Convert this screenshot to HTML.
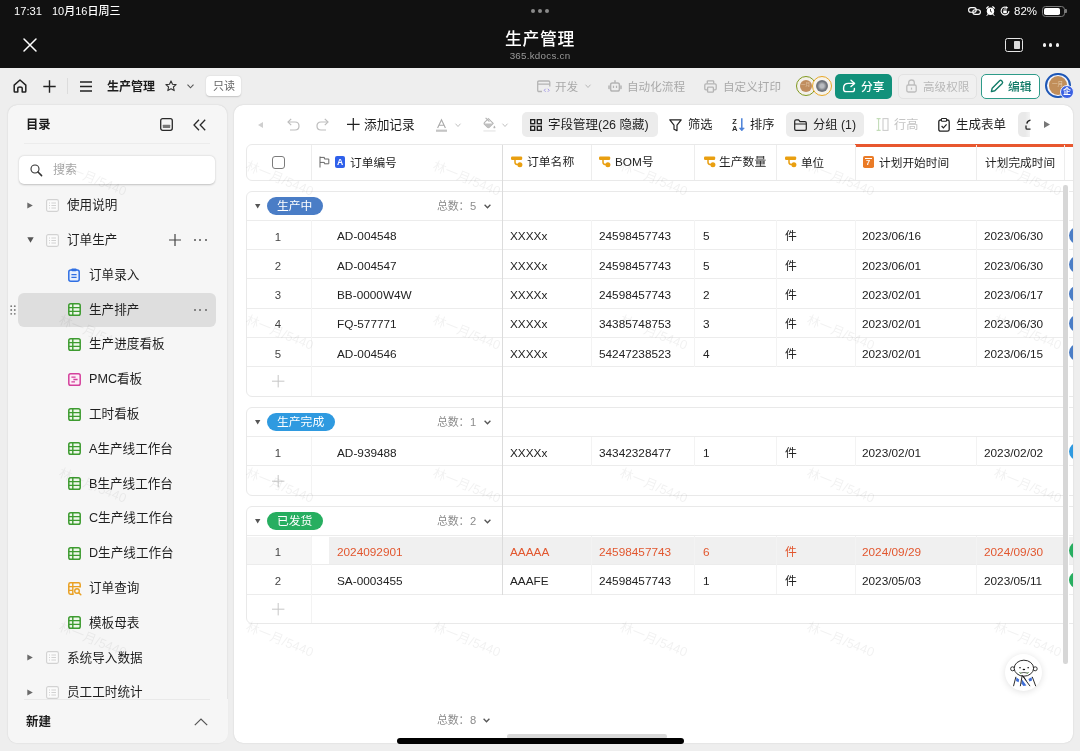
<!DOCTYPE html>
<html lang="zh-CN">
<head>
<meta charset="utf-8">
<title>生产管理</title>
<style>
*{box-sizing:border-box;margin:0;padding:0}
html,body{width:1080px;height:751px;overflow:hidden}
body{position:relative;background:#eeeeee;font-family:"Liberation Sans","Noto Sans CJK SC",sans-serif;color:#222;font-size:12px;-webkit-font-smoothing:antialiased}
.abs{position:absolute}
svg{display:block;overflow:visible}
.t{position:absolute;white-space:nowrap;line-height:1;will-change:transform}
/* ---------- top black area ---------- */
#top{position:absolute;left:0;top:0;width:1080px;height:68px;background:#111111}
#top .t{color:#fff}
/* ---------- app toolbar ---------- */
#bar{position:absolute;left:0;top:68px;width:1080px;height:37px;background:#eeeeee}
.gray{color:#a9a9a9}
.btn{position:absolute;height:25px;border-radius:5px;top:74px}
/* ---------- sidebar ---------- */
#side{position:absolute;left:7.6px;top:105px;width:219.8px;height:638px;background:#f6f6f6;border-radius:9px;box-shadow:0 0 1.5px rgba(0,0,0,.18)}
.item{position:absolute;left:0;height:34px;width:220px}
.item .t{font-size:12.5px;color:#1f1f1f;top:11px}
#wm{position:absolute;left:0;top:105px;width:1073px;height:638px;overflow:hidden;pointer-events:none}
#wm .w{position:absolute;white-space:nowrap;line-height:1;font-size:13px;color:rgba(0,0,0,.055);transform-origin:0 0;transform:rotate(22deg);margin-top:-105px}
/* ---------- main ---------- */
#main{position:absolute;left:234px;top:105px;width:839px;height:638px;background:#fff;border-radius:9px;box-shadow:0 0 1.5px rgba(0,0,0,.18);overflow:hidden}
</style>
</head>
<body>

<!-- ================= TOP BLACK AREA ================= -->
<div id="top">
  <div class="t" style="left:13.8px;top:5.5px;font-size:11.2px;font-weight:400">17:31</div>
  <div class="t" style="left:51.5px;top:5.5px;font-size:11px;font-weight:500">10月16日周三</div>
  <!-- centre dots -->
  <div class="abs" style="left:530.7px;top:8.7px;width:4.6px;height:4.6px;border-radius:50%;background:#8a8a8a"></div>
  <div class="abs" style="left:537.7px;top:8.7px;width:4.6px;height:4.6px;border-radius:50%;background:#8a8a8a"></div>
  <div class="abs" style="left:544.7px;top:8.7px;width:4.6px;height:4.6px;border-radius:50%;background:#8a8a8a"></div>
  <!-- status icons -->
  <!-- link icon -->
  <svg class="abs" style="left:968px;top:7px" width="13" height="8" viewBox="0 0 13 8"><rect x="0.6" y="0.6" width="7.6" height="4.6" rx="2.3" fill="none" stroke="#fff" stroke-width="1.1"/><rect x="4.8" y="2.8" width="7.6" height="4.6" rx="2.3" fill="none" stroke="#fff" stroke-width="1.1"/></svg>
  <!-- alarm -->
  <svg class="abs" style="left:986px;top:6px" width="9" height="10" viewBox="0 0 9 10"><circle cx="4.5" cy="5.2" r="3.7" fill="#fff"/><path d="M0.6 2.2L2.2 0.7M8.4 2.2L6.8 0.7" stroke="#fff" stroke-width="1.2" stroke-linecap="round"/><path d="M1.8 8.4L1 9.5M7.2 8.4L8 9.5" stroke="#fff" stroke-width="1" stroke-linecap="round"/><path d="M4.5 3V5.4L6 6.2" stroke="#111" stroke-width="0.8" fill="none"/></svg>
  <!-- rotation lock -->
  <svg class="abs" style="left:1000px;top:6px" width="10" height="10" viewBox="0 0 10 10"><path d="M8.9 5A3.9 3.9 0 1 1 6.9 1.6" fill="none" stroke="#fff" stroke-width="1.1"/><path d="M6.2 0.2L8.2 1.7L6 2.9Z" fill="#fff"/><rect x="3.2" y="4.4" width="3.6" height="2.8" rx="0.5" fill="#fff"/><path d="M3.9 4.4V3.6Q3.9 2.7 5 2.7Q6.1 2.7 6.1 3.6V4.4" fill="none" stroke="#fff" stroke-width="0.8"/></svg>
  <div class="t" style="left:1014px;top:6px;font-size:11.5px;font-weight:500">82%</div>
  <!-- battery -->
  <div class="abs" style="left:1042px;top:5.5px;width:22.5px;height:11px;border:1px solid #7a7a7a;border-radius:3.5px"></div>
  <div class="abs" style="left:1044px;top:7.5px;width:15.5px;height:7px;background:#fff;border-radius:1.8px"></div>
  <div class="abs" style="left:1065.3px;top:9px;width:1.4px;height:4px;background:#7a7a7a;border-radius:0 1px 1px 0"></div>
  <!-- split view -->
  <div class="abs" style="left:1005px;top:38px;width:18px;height:14px;border:1.4px solid #e6e6e6;border-radius:2.5px"></div>
  <div class="abs" style="left:1014px;top:41px;width:6.3px;height:8px;background:#dcdcdc;border-radius:0.8px"></div>
  <!-- more dots -->
  <div class="abs" style="left:1042.7px;top:43.4px;width:3.3px;height:3.3px;border-radius:50%;background:#f0f0f0"></div>
  <div class="abs" style="left:1049.1px;top:43.4px;width:3.3px;height:3.3px;border-radius:50%;background:#f0f0f0"></div>
  <div class="abs" style="left:1055.5px;top:43.4px;width:3.3px;height:3.3px;border-radius:50%;background:#f0f0f0"></div>
  <!-- close X -->
  <svg class="abs" style="left:22.6px;top:37.6px" width="14" height="14" viewBox="0 0 14 14"><path d="M1 1L13 13M13 1L1 13" stroke="#fff" stroke-width="1.5" fill="none" stroke-linecap="round"/></svg>
  <div class="t" style="left:0;width:1080px;text-align:center;top:31.7px;font-size:16.8px;letter-spacing:.7px;font-weight:500">生产管理</div>
  <div class="t" style="left:0;width:1080px;text-align:center;top:50.6px;font-size:9.8px;color:#9a9a9a;letter-spacing:.25px">365.kdocs.cn</div>
</div>

<!-- ================= APP TOOLBAR ================= -->
<div id="bar">
  <!-- home -->
  <svg class="abs" style="left:13px;top:11px" width="14" height="14" viewBox="0 0 14 14"><path d="M1.2 6.1 L7 1 L12.8 6.1 V12.2 Q12.8 13 12 13 H9.2 V9.3 Q9.2 8 7 8 Q4.8 8 4.8 9.3 V13 H2 Q1.2 13 1.2 12.2 Z" fill="none" stroke="#222" stroke-width="1.5" stroke-linejoin="round"/></svg>
  <!-- plus -->
  <svg class="abs" style="left:43px;top:12px" width="13" height="13" viewBox="0 0 13 13"><path d="M6.5 0.3V12.7M0.3 6.5H12.7" stroke="#222" stroke-width="1.4" fill="none"/></svg>
  <div class="abs" style="left:67px;top:10px;width:1px;height:16px;background:#dcdcdc"></div>
  <!-- hamburger -->
  <svg class="abs" style="left:80px;top:13px" width="12" height="11" viewBox="0 0 12 11"><path d="M0 1H12M0 5.5H12M0 10H12" stroke="#222" stroke-width="1.3" fill="none"/></svg>
  <div class="t" style="left:107px;top:13px;font-size:12px;font-weight:700;color:#1c1c1c">生产管理</div>
  <!-- star -->
  <svg class="abs" style="left:165px;top:12px" width="12" height="12" viewBox="0 0 12 12"><path d="M6 0.9 L7.5 4.2 L11.1 4.6 L8.4 7 L9.2 10.6 L6 8.8 L2.8 10.6 L3.6 7 L0.9 4.6 L4.5 4.2 Z" fill="none" stroke="#333" stroke-width="1.1" stroke-linejoin="round"/></svg>
  <!-- chevron -->
  <svg class="abs" style="left:187px;top:16px" width="7" height="5" viewBox="0 0 7 5"><path d="M0.5 0.7L3.5 3.8L6.5 0.7" stroke="#555" stroke-width="1.1" fill="none"/></svg>
  <!-- read only badge -->
  <div class="abs" style="left:206px;top:8px;width:35px;height:20px;background:#fff;border-radius:4px;box-shadow:0 0.5px 1.5px rgba(0,0,0,.18)"></div>
  <div class="t" style="left:213px;top:13px;font-size:11px;color:#666">只读</div>

  <!-- dev -->
  <svg class="abs" style="left:537px;top:12px" width="14" height="13" viewBox="0 0 14 13"><path d="M5 11.5H2Q0.7 11.5 0.7 10.2V2.3Q0.7 1 2 1H11.5Q12.8 1 12.8 2.3V6.5M0.7 4.2H12.8" fill="none" stroke="#b4b4b4" stroke-width="1.3"/><path d="M8.6 8.8L7.2 10.3L8.6 11.8M10.8 8.8L12.2 10.3L10.8 11.8" fill="none" stroke="#a79be8" stroke-width="1"/></svg>
  <div class="t gray" style="left:555px;top:13px;font-size:11.6px">开发</div>
  <svg class="abs" style="left:585px;top:16px" width="6" height="5" viewBox="0 0 6 5"><path d="M0.5 0.7L3 3.5L5.5 0.7" stroke="#b8b8b8" stroke-width="1" fill="none"/></svg>
  <!-- robot -->
  <svg class="abs" style="left:608px;top:11px" width="14" height="14" viewBox="0 0 14 14"><path d="M7 1.2V3.8" stroke="#b4b4b4" stroke-width="1.5"/><rect x="2.6" y="3.9" width="8.8" height="8.2" rx="1.8" fill="none" stroke="#b4b4b4" stroke-width="1.5"/><path d="M1 7V9.4M13 7V9.4" stroke="#b4b4b4" stroke-width="1.5" stroke-linecap="round"/><path d="M5.5 6.8V9M8.5 6.8V9" stroke="#b4b4b4" stroke-width="1.2"/></svg>
  <div class="t gray" style="left:627px;top:13px;font-size:11.6px">自动化流程</div>
  <!-- printer -->
  <svg class="abs" style="left:704px;top:12px" width="13" height="13" viewBox="0 0 13 13"><path d="M3.3 3.6V1.6Q3.3 0.8 4.1 0.8H8.9Q9.7 0.8 9.7 1.6V3.6" fill="none" stroke="#b4b4b4" stroke-width="1.3"/><path d="M3.2 9.8H2Q0.8 9.8 0.8 8.6V5Q0.8 3.8 2 3.8H11Q12.2 3.8 12.2 5V8.6Q12.2 9.8 11 9.8H9.8" fill="none" stroke="#b4b4b4" stroke-width="1.3"/><rect x="3.6" y="7.2" width="5.8" height="5" rx="0.8" fill="none" stroke="#b4b4b4" stroke-width="1.3"/></svg>
  <div class="t gray" style="left:723px;top:13px;font-size:11.6px">自定义打印</div>

  <!-- avatars -->
  <div class="abs" style="left:795.8px;top:7.7px;width:20px;height:20px;border-radius:50%;background:#f3f0ea;border:1.8px solid #80991f"></div>
  <div class="abs" style="left:799.8px;top:11.7px;width:12px;height:12px;border-radius:50%;background:#c08d5e"></div>
  <div class="t" style="left:801.3px;top:15.2px;font-size:4.5px;color:#e9d2b8">一月</div>
  <div class="abs" style="left:811.7px;top:7.7px;width:20px;height:20px;border-radius:50%;background:#f6f3ec;border:1.8px solid #e8a826"></div>
  <div class="abs" style="left:815.5px;top:11.5px;width:12.4px;height:12.4px;border-radius:50%;background:radial-gradient(circle,#b9bcc0 0 22%,#6f737a 55%,#7d8087 100%)"></div>
  <!-- share -->
  <div class="abs" style="left:835px;top:5.5px;width:56.5px;height:25px;border-radius:5px;background:#12917b"></div>
  <svg class="abs" style="left:842px;top:11px" width="14" height="14" viewBox="0 0 14 14"><path d="M9 1.2L12.6 4.4L9 7.6" fill="none" stroke="#fff" stroke-width="1.4" stroke-linejoin="round" stroke-linecap="round"/><path d="M12.4 4.4H6.5Q1.6 4.4 1.6 9V10.2Q1.6 12.6 4 12.6H10Q12.4 12.6 12.4 10.4V9.4" fill="none" stroke="#fff" stroke-width="1.4" stroke-linecap="round"/></svg>
  <div class="t" style="left:861px;top:13.5px;font-size:11.8px;color:#fff;font-weight:500">分享</div>
  <!-- advanced perm -->
  <div class="abs" style="left:897.5px;top:5.5px;width:79px;height:25px;border-radius:5px;background:#f0f0f0;border:1px solid #e2e2e2"></div>
  <svg class="abs" style="left:906px;top:11px" width="11" height="14" viewBox="0 0 11 14"><path d="M2.7 6V3.8Q2.7 1 5.5 1Q8.3 1 8.3 3.8V6" fill="none" stroke="#bdbdbd" stroke-width="1.3"/><rect x="0.8" y="6" width="9.4" height="7" rx="1.4" fill="none" stroke="#bdbdbd" stroke-width="1.3"/><path d="M5.5 8.6V10.6" stroke="#bdbdbd" stroke-width="1.2"/></svg>
  <div class="t" style="left:923px;top:13px;font-size:11.6px;color:#b8b8b8">高级权限</div>
  <!-- edit -->
  <div class="abs" style="left:981px;top:5.5px;width:58.5px;height:25px;border-radius:5px;background:#fff;border:1.2px solid #2e9b89"></div>
  <svg class="abs" style="left:990px;top:11px" width="14" height="14" viewBox="0 0 14 14"><path d="M1.4 12.6L2.2 9.2L9.6 1.8Q10.6 0.9 11.6 1.8L12.2 2.4Q13.1 3.4 12.2 4.4L4.8 11.8Z" fill="none" stroke="#117a67" stroke-width="1.4" stroke-linejoin="round"/></svg>
  <div class="t" style="left:1008px;top:13.5px;font-size:11.8px;color:#117a67;font-weight:500">编辑</div>
  <!-- me -->
  <div class="abs" style="left:1045.1px;top:4.8px;width:25.6px;height:25.6px;border-radius:50%;background:#f1f3fa;border:2px solid #1d56b6"></div>
  <div class="abs" style="left:1048.7px;top:8.3px;width:18.6px;height:18.6px;border-radius:50%;background:#c18e5a"></div>
  <div class="t" style="left:1051.6px;top:14px;font-size:5.6px;color:#e6cdae">一月</div>
  <div class="abs" style="left:1060.4px;top:17.2px;width:14px;height:14px;border-radius:50%;background:#3b60e2;border:0.8px solid #eef1fb"></div>
  <div class="t" style="left:1063.3px;top:20px;font-size:8px;color:#fff;font-weight:700">企</div>
</div>

<!-- ================= SIDEBAR ================= -->
<div id="side">
  <div class="t" style="left:18px;top:14px;font-size:12.3px;font-weight:700;color:#1c1c1c">目录</div>
  <svg class="abs" style="left:152.5px;top:13px" width="13" height="13" viewBox="0 0 13 13"><rect x="0.7" y="0.7" width="11.6" height="11.6" rx="2" fill="none" stroke="#2a2a2a" stroke-width="1.3"/><rect x="2.8" y="6.8" width="7.4" height="3.2" rx="0.5" fill="#777"/></svg>
  <svg class="abs" style="left:185px;top:14px" width="13" height="12" viewBox="0 0 13 12"><path d="M6 0.8L1 6L6 11.2M12.2 0.8L7.2 6L12.2 11.2" fill="none" stroke="#2a2a2a" stroke-width="1.3"/></svg>
  <div class="abs" style="left:16px;top:37.5px;width:186px;height:1px;background:#ececec"></div>
  <div class="abs" style="left:11px;top:50.5px;width:196.5px;height:28px;background:#fff;border-radius:5px;box-shadow:0 0.5px 2px rgba(0,0,0,.22)"></div>
  <svg class="abs" style="left:22.5px;top:58.6px" width="13" height="13" viewBox="0 0 13 13"><circle cx="5" cy="5" r="4" fill="none" stroke="#333" stroke-width="1.1"/><path d="M8 8L11.6 11.6" stroke="#333" stroke-width="1.5" stroke-linecap="round"/></svg>
  <div class="t" style="left:45px;top:58.5px;font-size:12px;color:#a8a8a8">搜索</div>
  <svg class="abs" style="left:19px;top:96.5px" width="6" height="7" viewBox="0 0 6 7"><path d="M0.3 0.4L5.8 3.5L0.3 6.6Z" fill="#6a6a6a"/></svg>
  <svg class="abs" style="left:38px;top:93.5px" width="13" height="13" viewBox="0 0 13 13"><rect x="0.6" y="0.6" width="11.8" height="11.8" rx="1.6" fill="#fbfbfb" stroke="#d2d2d2" stroke-width="1.1"/><path d="M3 4H4M5.4 4H10M3 6.5H4M5.4 6.5H10M3 9H4M5.4 9H10" stroke="#d2d2d2" stroke-width="1"/></svg>
  <div class="t" style="left:59px;top:94.3px;font-size:12.6px;color:#1f1f1f">使用说明</div>
  <svg class="abs" style="left:19px;top:132.0px" width="7" height="6" viewBox="0 0 7 6"><path d="M0.3 0.3H6.7L3.5 5.8Z" fill="#555"/></svg>
  <svg class="abs" style="left:161px;top:129.0px" width="12" height="12" viewBox="0 0 12 12"><path d="M6 0V12M0 6H12" stroke="#444" stroke-width="1.2"/></svg>
  <div class="abs" style="left:186.2px;top:134.0px;width:2px;height:2px;border-radius:50%;background:#555"></div>
  <div class="abs" style="left:191.6px;top:134.0px;width:2px;height:2px;border-radius:50%;background:#555"></div>
  <div class="abs" style="left:197.0px;top:134.0px;width:2px;height:2px;border-radius:50%;background:#555"></div>
  <svg class="abs" style="left:38px;top:128.5px" width="13" height="13" viewBox="0 0 13 13"><rect x="0.6" y="0.6" width="11.8" height="11.8" rx="1.6" fill="#fbfbfb" stroke="#d2d2d2" stroke-width="1.1"/><path d="M3 4H4M5.4 4H10M3 6.5H4M5.4 6.5H10M3 9H4M5.4 9H10" stroke="#d2d2d2" stroke-width="1"/></svg>
  <div class="t" style="left:59px;top:129.3px;font-size:12.6px;color:#1f1f1f">订单生产</div>
  <svg class="abs" style="left:60.5px;top:162.5px" width="12" height="14" viewBox="0 0 12 14"><rect x="0.8" y="2" width="10.4" height="11.2" rx="2" fill="#eaf1fd" stroke="#2f6fe3" stroke-width="1.5"/><rect x="3.4" y="0.4" width="5.2" height="2.8" rx="0.9" fill="#2f6fe3"/><path d="M3.4 6.6H8.6M3.4 9.4H8.6" stroke="#2f6fe3" stroke-width="1.3"/></svg>
  <div class="t" style="left:81px;top:163.8px;font-size:12.6px;color:#1f1f1f">订单录入</div>
  <div class="abs" style="left:10.5px;top:188.0px;width:197.5px;height:33.5px;background:#dedede;border-radius:6px"></div>
  <div class="abs" style="left:186.2px;top:203.5px;width:2px;height:2px;border-radius:50%;background:#666"></div>
  <div class="abs" style="left:191.6px;top:203.5px;width:2px;height:2px;border-radius:50%;background:#666"></div>
  <div class="abs" style="left:197.0px;top:203.5px;width:2px;height:2px;border-radius:50%;background:#666"></div>
  <svg class="abs" style="left:60px;top:198.0px" width="13" height="13" viewBox="0 0 13 13"><rect x="0.8" y="0.8" width="11.4" height="11.4" rx="1.8" fill="#eef7ea" stroke="#3d9b30" stroke-width="1.5"/><path d="M0.8 4.6H12.2M0.8 8.4H12.2M4.8 0.8V12.2" stroke="#3d9b30" stroke-width="1.4"/></svg>
  <div class="t" style="left:81px;top:198.8px;font-size:12.6px;color:#1f1f1f">生产排产</div>
  <svg class="abs" style="left:60px;top:232.5px" width="13" height="13" viewBox="0 0 13 13"><rect x="0.8" y="0.8" width="11.4" height="11.4" rx="1.8" fill="#eef7ea" stroke="#3d9b30" stroke-width="1.5"/><path d="M0.8 4.6H12.2M0.8 8.4H12.2M4.8 0.8V12.2" stroke="#3d9b30" stroke-width="1.4"/></svg>
  <div class="t" style="left:81px;top:233.3px;font-size:12.6px;color:#1f1f1f">生产进度看板</div>
  <svg class="abs" style="left:60px;top:267.5px" width="13" height="13" viewBox="0 0 13 13"><rect x="0.8" y="0.8" width="11.4" height="11.4" rx="1.8" fill="#fdeef7" stroke="#d4409c" stroke-width="1.5"/><path d="M3.4 4.2H7.6M5.4 6.5H9.6M3.4 8.8H7" stroke="#d4409c" stroke-width="1.3"/></svg>
  <div class="t" style="left:81px;top:268.3px;font-size:12.6px;color:#1f1f1f">PMC看板</div>
  <svg class="abs" style="left:60px;top:302.5px" width="13" height="13" viewBox="0 0 13 13"><rect x="0.8" y="0.8" width="11.4" height="11.4" rx="1.8" fill="#eef7ea" stroke="#3d9b30" stroke-width="1.5"/><path d="M0.8 4.6H12.2M0.8 8.4H12.2M4.8 0.8V12.2" stroke="#3d9b30" stroke-width="1.4"/></svg>
  <div class="t" style="left:81px;top:303.3px;font-size:12.6px;color:#1f1f1f">工时看板</div>
  <svg class="abs" style="left:60px;top:337.0px" width="13" height="13" viewBox="0 0 13 13"><rect x="0.8" y="0.8" width="11.4" height="11.4" rx="1.8" fill="#eef7ea" stroke="#3d9b30" stroke-width="1.5"/><path d="M0.8 4.6H12.2M0.8 8.4H12.2M4.8 0.8V12.2" stroke="#3d9b30" stroke-width="1.4"/></svg>
  <div class="t" style="left:81px;top:337.8px;font-size:12.6px;color:#1f1f1f">A生产线工作台</div>
  <svg class="abs" style="left:60px;top:372.0px" width="13" height="13" viewBox="0 0 13 13"><rect x="0.8" y="0.8" width="11.4" height="11.4" rx="1.8" fill="#eef7ea" stroke="#3d9b30" stroke-width="1.5"/><path d="M0.8 4.6H12.2M0.8 8.4H12.2M4.8 0.8V12.2" stroke="#3d9b30" stroke-width="1.4"/></svg>
  <div class="t" style="left:81px;top:372.8px;font-size:12.6px;color:#1f1f1f">B生产线工作台</div>
  <svg class="abs" style="left:60px;top:406.5px" width="13" height="13" viewBox="0 0 13 13"><rect x="0.8" y="0.8" width="11.4" height="11.4" rx="1.8" fill="#eef7ea" stroke="#3d9b30" stroke-width="1.5"/><path d="M0.8 4.6H12.2M0.8 8.4H12.2M4.8 0.8V12.2" stroke="#3d9b30" stroke-width="1.4"/></svg>
  <div class="t" style="left:81px;top:407.3px;font-size:12.6px;color:#1f1f1f">C生产线工作台</div>
  <svg class="abs" style="left:60px;top:441.5px" width="13" height="13" viewBox="0 0 13 13"><rect x="0.8" y="0.8" width="11.4" height="11.4" rx="1.8" fill="#eef7ea" stroke="#3d9b30" stroke-width="1.5"/><path d="M0.8 4.6H12.2M0.8 8.4H12.2M4.8 0.8V12.2" stroke="#3d9b30" stroke-width="1.4"/></svg>
  <div class="t" style="left:81px;top:442.3px;font-size:12.6px;color:#1f1f1f">D生产线工作台</div>
  <svg class="abs" style="left:60px;top:476.5px" width="14" height="14" viewBox="0 0 14 14"><path d="M12.2 5.6V2.4Q12.2 0.8 10.6 0.8H2.4Q0.8 0.8 0.8 2.4V10.6Q0.8 12.2 2.4 12.2H5.6" fill="none" stroke="#e9a023" stroke-width="1.5"/><path d="M0.8 4.6H12.2M4.8 0.8V12.2M0.8 8.4H5" stroke="#e9a023" stroke-width="1.4"/><circle cx="9" cy="9" r="2.3" fill="none" stroke="#e9a023" stroke-width="1.4"/><path d="M10.8 10.8L12.8 12.8" stroke="#e9a023" stroke-width="1.5" stroke-linecap="round"/></svg>
  <div class="t" style="left:81px;top:477.3px;font-size:12.6px;color:#1f1f1f">订单查询</div>
  <svg class="abs" style="left:60px;top:511.0px" width="13" height="13" viewBox="0 0 13 13"><rect x="0.8" y="0.8" width="11.4" height="11.4" rx="1.8" fill="#eef7ea" stroke="#3d9b30" stroke-width="1.5"/><path d="M0.8 4.6H12.2M0.8 8.4H12.2M4.8 0.8V12.2" stroke="#3d9b30" stroke-width="1.4"/></svg>
  <div class="t" style="left:81px;top:511.8px;font-size:12.6px;color:#1f1f1f">模板母表</div>
  <svg class="abs" style="left:19px;top:549.0px" width="6" height="7" viewBox="0 0 6 7"><path d="M0.3 0.4L5.8 3.5L0.3 6.6Z" fill="#6a6a6a"/></svg>
  <svg class="abs" style="left:38px;top:546.0px" width="13" height="13" viewBox="0 0 13 13"><rect x="0.6" y="0.6" width="11.8" height="11.8" rx="1.6" fill="#fbfbfb" stroke="#d2d2d2" stroke-width="1.1"/><path d="M3 4H4M5.4 4H10M3 6.5H4M5.4 6.5H10M3 9H4M5.4 9H10" stroke="#d2d2d2" stroke-width="1"/></svg>
  <div class="t" style="left:59px;top:546.8px;font-size:12.6px;color:#1f1f1f">系统导入数据</div>
  <svg class="abs" style="left:19px;top:583.5px" width="6" height="7" viewBox="0 0 6 7"><path d="M0.3 0.4L5.8 3.5L0.3 6.6Z" fill="#6a6a6a"/></svg>
  <svg class="abs" style="left:38px;top:580.5px" width="13" height="13" viewBox="0 0 13 13"><rect x="0.6" y="0.6" width="11.8" height="11.8" rx="1.6" fill="#fbfbfb" stroke="#d2d2d2" stroke-width="1.1"/><path d="M3 4H4M5.4 4H10M3 6.5H4M5.4 6.5H10M3 9H4M5.4 9H10" stroke="#d2d2d2" stroke-width="1"/></svg>
  <div class="t" style="left:59px;top:581.3px;font-size:12.6px;color:#1f1f1f">员工工时统计</div>
  <div class="abs" style="left:0;top:594px;width:220px;height:44px;background:#f6f6f6;border-radius:0 0 9px 9px"></div>
  <div class="abs" style="left:16px;top:594px;width:186px;height:1px;background:#e9e9e9"></div>
  <div class="t" style="left:18px;top:610.5px;font-size:12.5px;font-weight:700;color:#1c1c1c">新建</div>
  <svg class="abs" style="left:186px;top:613px" width="14" height="8" viewBox="0 0 14 8"><path d="M0.8 7.2L7 1L13.2 7.2" fill="none" stroke="#555" stroke-width="1.2"/></svg>
</div>
<!-- drag handle -->
<svg class="abs" style="left:10px;top:304.5px" width="6" height="10" viewBox="0 0 6 10"><g fill="#777"><circle cx="1.2" cy="1.2" r="0.9"/><circle cx="4.8" cy="1.2" r="0.9"/><circle cx="1.2" cy="5" r="0.9"/><circle cx="4.8" cy="5" r="0.9"/><circle cx="1.2" cy="8.8" r="0.9"/><circle cx="4.8" cy="8.8" r="0.9"/></g></svg>

<!-- ================= MAIN ================= -->
<!--MAIN-START-->
<div id="main">
  <svg class="abs" style="left:23.5px;top:16.5px" width="5" height="6" viewBox="0 0 5 6"><path d="M5 0L0 3L5 6Z" fill="#cfcfcf"/></svg>
  <svg class="abs" style="left:52.5px;top:13px" width="13" height="13" viewBox="0 0 13 13"><path d="M4.2 0.8L1 4L4.2 7.2" fill="none" stroke="#bdbdbd" stroke-width="1.2"/><path d="M1.2 4H8Q12 4 12 8Q12 12 8 12H3" fill="none" stroke="#bdbdbd" stroke-width="1.2"/></svg>
  <svg class="abs" style="left:81.8px;top:13px" width="13" height="13" viewBox="0 0 13 13"><path d="M8.8 0.8L12 4L8.8 7.2" fill="none" stroke="#bdbdbd" stroke-width="1.2"/><path d="M11.8 4H5Q1 4 1 8Q1 12 5 12H10" fill="none" stroke="#bdbdbd" stroke-width="1.2"/></svg>
  <svg class="abs" style="left:113px;top:13.2px" width="12.6" height="12.6" viewBox="0 0 12.6 12.6"><path d="M6.3 0V12.6M0 6.3H12.6" stroke="#222" stroke-width="1.25"/></svg>
  <div class="t" style="left:129.8px;top:14.15px;font-size:12.7px;color:#1f1f1f;">添加记录</div>
  <svg class="abs" style="left:202px;top:13.5px" width="11" height="13" viewBox="0 0 11 13"><path d="M1.6 9L5.5 0.8L9.4 9M3 6.2H8" fill="none" stroke="#a9a9a9" stroke-width="1.1"/><rect x="0" y="10.6" width="11" height="2.2" fill="#c4c4c4"/></svg>
  <svg class="abs" style="left:220.6px;top:17.5px" width="6" height="5" viewBox="0 0 6 5"><path d="M0.5 0.7L3 3.5L5.5 0.7" stroke="#c2c2c2" stroke-width="1" fill="none"/></svg>
  <svg class="abs" style="left:248.6px;top:11.8px" width="13" height="15" viewBox="0 0 13 15"><path d="M2.6 0.8L6.4 4.6" stroke="#b4b4b4" stroke-width="1.1" fill="none"/><path d="M5.4 1.6L10.2 6.4L6.4 10.2Q5.4 11.2 4.4 10.2L1.6 7.4Q0.6 6.4 1.6 5.4Z" fill="none" stroke="#b4b4b4" stroke-width="1.1" stroke-linejoin="round"/><path d="M1.2 6.4H10.2L6.4 10.2Q5.4 11.2 4.4 10.2L1.6 7.4Q1 6.9 1.2 6.4Z" fill="#c0c0c0"/><path d="M11.4 8.4Q12.4 9.8 12.4 10.4Q12.4 11.3 11.4 11.3Q10.4 11.3 10.4 10.4Q10.4 9.8 11.4 8.4Z" fill="#b4b4b4"/><rect x="0.4" y="13" width="12.2" height="1.8" fill="#eeeeee"/></svg>
  <svg class="abs" style="left:268.2px;top:17.5px" width="6" height="5" viewBox="0 0 6 5"><path d="M0.5 0.7L3 3.5L5.5 0.7" stroke="#c2c2c2" stroke-width="1" fill="none"/></svg>
  <div class="abs" style="left:288.3px;top:7px;width:135.5px;height:25px;background:#ececec;border-radius:5px"></div>
  <svg class="abs" style="left:295.7px;top:13.8px" width="12" height="12" viewBox="0 0 12 12"><g fill="none" stroke="#222" stroke-width="1.4"><rect x="0.7" y="0.7" width="4" height="4"/><rect x="7.3" y="0.7" width="4" height="4"/><rect x="0.7" y="7.3" width="4" height="4"/><rect x="7.3" y="7.3" width="4" height="4"/></g></svg>
  <div class="t" style="left:313.8px;top:14.25px;font-size:12.5px;color:#1f1f1f;">字段管理(26 隐藏)</div>
  <svg class="abs" style="left:435.4px;top:13.8px" width="13" height="13" viewBox="0 0 13 13"><path d="M0.8 0.8H12.2L8 6.2V11.6L5 10.2V6.2Z" fill="none" stroke="#222" stroke-width="1.2" stroke-linejoin="round"/></svg>
  <div class="t" style="left:454px;top:14.35px;font-size:12.3px;color:#1f1f1f;">筛选</div>
  <svg class="abs" style="left:498.4px;top:12.6px;will-change:transform" width="13" height="14" viewBox="0 0 13 14"><text x="0.2" y="6.1" font-family="Liberation Sans, sans-serif" font-size="7.4" font-weight="700" fill="#2a2a2a">Z</text><text x="0" y="13" font-family="Liberation Sans, sans-serif" font-size="7.6" font-weight="700" fill="#2a2a2a">A</text><path d="M9.8 0.3V10.8" fill="none" stroke="#4a80d8" stroke-width="1.5"/><path d="M7.3 10L9.8 13L12.3 10Z" fill="#4a80d8" stroke="#4a80d8" stroke-width="0.6" stroke-linejoin="round"/></svg>
  <div class="t" style="left:516px;top:14.35px;font-size:12.3px;color:#1f1f1f;">排序</div>
  <div class="abs" style="left:552px;top:7px;width:78px;height:25px;background:#ececec;border-radius:5px"></div>
  <svg class="abs" style="left:560px;top:13.5px" width="13" height="12" viewBox="0 0 13 12"><path d="M0.7 2.2Q0.7 0.8 2 0.8H4.6L6 2.6H11Q12.3 2.6 12.3 3.9V10Q12.3 11.3 11 11.3H2Q0.7 11.3 0.7 10Z" fill="none" stroke="#222" stroke-width="1.2" stroke-linejoin="round"/><path d="M0.7 5H12.3" stroke="#222" stroke-width="1.1"/></svg>
  <div class="t" style="left:578.5px;top:14.35px;font-size:12.3px;color:#1f1f1f;">分组 (1)</div>
  <svg class="abs" style="left:641.8px;top:13.2px" width="13" height="13" viewBox="0 0 13 13"><path d="M0.6 0.6H4.6M0.6 12.4H4.6M2.6 0.6V12.4" stroke="#c3dcb8" stroke-width="1.1" fill="none"/><rect x="7" y="0.6" width="5" height="11.8" fill="none" stroke="#cdcdcd" stroke-width="1.1"/></svg>
  <div class="t" style="left:660px;top:14.40px;font-size:12.2px;color:#c4c4c4;">行高</div>
  <svg class="abs" style="left:704.3px;top:12.6px" width="12" height="14" viewBox="0 0 12 14"><rect x="0.8" y="2" width="10.4" height="11.2" rx="1.8" fill="none" stroke="#222" stroke-width="1.3"/><rect x="3.4" y="0.5" width="5.2" height="2.8" rx="0.8" fill="#fff" stroke="#222" stroke-width="1.1"/><path d="M3.6 8L5.4 9.8L8.6 6.4" fill="none" stroke="#222" stroke-width="1.2"/></svg>
  <div class="t" style="left:721.5px;top:14.25px;font-size:12.5px;color:#1f1f1f;">生成表单</div>
  <div class="abs" style="left:784.3px;top:7px;width:12px;height:25px;background:linear-gradient(90deg,#e9e9e9 60%,#f4f4f4);border-radius:5px 0 0 5px"></div>
  <svg class="abs" style="left:790.5px;top:14px" width="6" height="11" viewBox="0 0 6 11"><path d="M5.5 1.2Q2.4 1.6 1.8 4.6M1 6.4V9Q1 10.2 2.2 10.2H5.5" fill="none" stroke="#222" stroke-width="1.3"/></svg>
  <svg class="abs" style="left:810.3px;top:16.3px" width="6" height="7" viewBox="0 0 6 7"><path d="M0 0L6 3.5L0 7Z" fill="#777"/></svg>
  <div class="abs" style="left:11.5px;top:39px;width:840px;height:36.5px;border:1px solid #e9e9e9;border-radius:6px 0 0 6px;background:#fff"></div>
  <div class="abs" style="left:621px;top:39px;width:220px;height:3.2px;background:#e8572f"></div>
  <div class="abs" style="left:76.5px;top:40px;width:1px;height:35px;background:#ededed"></div>
  <div class="abs" style="left:267.8px;top:40px;width:1px;height:35px;background:#e1e1e1"></div>
  <div class="abs" style="left:356.5px;top:40px;width:1px;height:35px;background:#ededed"></div>
  <div class="abs" style="left:460.0px;top:40px;width:1px;height:35px;background:#ededed"></div>
  <div class="abs" style="left:542.0px;top:40px;width:1px;height:35px;background:#ededed"></div>
  <div class="abs" style="left:620.5px;top:40px;width:1px;height:35px;background:#ededed"></div>
  <div class="abs" style="left:742.1px;top:40px;width:1px;height:35px;background:#ededed"></div>
  <div class="abs" style="left:830.1px;top:40px;width:1px;height:35px;background:#ededed"></div>
  <div class="abs" style="left:38px;top:51.3px;width:12.8px;height:12.8px;border:1.2px solid #7c7c7c;border-radius:3px;background:#fff"></div>
  <svg class="abs" style="left:84.7px;top:51.4px" width="11" height="12" viewBox="0 0 11 12"><path d="M1 0.5V11.5" stroke="#666" stroke-width="1"/><path d="M1 1.4H5.4V3H9.8V7.8H5.4V6.4H1" fill="none" stroke="#666" stroke-width="1"/></svg>
  <div class="abs" style="left:100.8px;top:51.3px;width:10px;height:12px;background:#2f60ea;border-radius:2px"></div>
  <div class="t" style="left:102.7px;top:53.3px;font-size:8.6px;font-weight:700;color:#fff">A</div>
  <div class="t" style="left:116px;top:52.35px;font-size:11.7px;color:#222;">订单编号</div>
  <svg class="abs" style="left:277px;top:51px" width="12" height="12" viewBox="0 0 12 12"><rect x="0" y="0.4" width="11.2" height="3.6" rx="1.2" fill="#e99f10"/><path d="M4 3.6V6.2Q4 8.2 6 8.4L8 8.6" fill="none" stroke="#e99f10" stroke-width="1.5"/><circle cx="8.9" cy="8.7" r="2.5" fill="#e99f10"/></svg>
  <div class="t" style="left:293px;top:52.30px;font-size:11.8px;color:#222;">订单名称</div>
  <svg class="abs" style="left:365.4px;top:51px" width="12" height="12" viewBox="0 0 12 12"><rect x="0" y="0.4" width="11.2" height="3.6" rx="1.2" fill="#e99f10"/><path d="M4 3.6V6.2Q4 8.2 6 8.4L8 8.6" fill="none" stroke="#e99f10" stroke-width="1.5"/><circle cx="8.9" cy="8.7" r="2.5" fill="#e99f10"/></svg>
  <div class="t" style="left:381.3px;top:52.30px;font-size:11.8px;color:#222;">BOM号</div>
  <svg class="abs" style="left:469.6px;top:51px" width="12" height="12" viewBox="0 0 12 12"><rect x="0" y="0.4" width="11.2" height="3.6" rx="1.2" fill="#e99f10"/><path d="M4 3.6V6.2Q4 8.2 6 8.4L8 8.6" fill="none" stroke="#e99f10" stroke-width="1.5"/><circle cx="8.9" cy="8.7" r="2.5" fill="#e99f10"/></svg>
  <div class="t" style="left:485.4px;top:52.30px;font-size:11.8px;color:#222;">生产数量</div>
  <svg class="abs" style="left:551px;top:51px" width="12" height="12" viewBox="0 0 12 12"><rect x="0" y="0.4" width="11.2" height="3.6" rx="1.2" fill="#e99f10"/><path d="M4 3.6V6.2Q4 8.2 6 8.4L8 8.6" fill="none" stroke="#e99f10" stroke-width="1.5"/><circle cx="8.9" cy="8.7" r="2.5" fill="#e99f10"/></svg>
  <div class="t" style="left:567.4px;top:52.40px;font-size:11.6px;color:#222;">单位</div>
  <div class="abs" style="left:629.3px;top:51.4px;width:10.6px;height:11.2px;background:#ea7b27;border-radius:1.8px"></div>
  <div class="t" style="left:632.3px;top:53.6px;font-size:7.5px;font-weight:700;color:#fff">7</div>
  <div class="abs" style="left:631.2px;top:53px;width:6.8px;height:1px;background:#fff"></div>
  <div class="t" style="left:645.2px;top:52.35px;font-size:11.7px;color:#222;">计划开始时间</div>
  <div class="t" style="left:750.7px;top:52.35px;font-size:11.7px;color:#222;">计划完成时间</div>
  <div class="abs" style="left:11.5px;top:86px;width:840px;height:205.70px;border:1px solid #e9e9e9;border-radius:6px 0 0 6px;background:#fff"></div>
  <svg class="abs" style="left:21.3px;top:98.55px" width="5.4" height="4.6" viewBox="0 0 5.4 4.6"><path d="M0 0H5.4L2.7 4.6Z" fill="#555"/></svg>
  <div class="abs" style="left:33px;top:92.15px;width:56.3px;height:17.6px;border-radius:9px;background:#4a7dc6"></div>
  <div class="t" style="left:43.3px;top:95.55px;font-size:11.8px;color:#fff;">生产中</div>
  <div class="t" style="left:203px;top:95.85px;font-size:11px;color:#8c8c8c;letter-spacing:-0.2px;">总数：</div>
  <div class="t" style="left:236px;top:95.55px;font-size:11.2px;color:#8c8c8c;">5</div>
  <svg class="abs" style="left:249.6px;top:98.95px" width="7" height="5" viewBox="0 0 7 5"><path d="M0.6 0.8L3.5 3.8L6.4 0.8" stroke="#555" stroke-width="1.3" fill="none"/></svg>
  <div class="abs" style="left:12.5px;top:114.80px;width:840px;height:1px;background:#ececec"></div>
  <div class="t" style="left:34px;width:20px;text-align:center;top:126.55px;font-size:11.4px;color:#444">1</div>
  <div class="t" style="left:103.2px;top:126.45px;font-size:11.8px;color:#222;">AD-004548</div>
  <div class="t" style="left:276.3px;top:126.45px;font-size:11.8px;color:#222;">XXXXx</div>
  <div class="t" style="left:364.8px;top:126.45px;font-size:11.8px;color:#222;">24598457743</div>
  <div class="t" style="left:469px;top:126.45px;font-size:11.8px;color:#222;">5</div>
  <div class="t" style="left:551px;top:126.35px;font-size:11.8px;color:#222;">件</div>
  <div class="t" style="left:628px;top:126.45px;font-size:11.8px;color:#222;">2023/06/16</div>
  <div class="t" style="left:750px;top:126.45px;font-size:11.8px;color:#222;">2023/06/30</div>
  <div class="abs" style="left:835px;top:121.95px;width:30px;height:16.8px;border-radius:8.4px;background:#4a7dc6"></div>
  <div class="abs" style="left:12.5px;top:144.10px;width:840px;height:1px;background:#ececec"></div>
  <div class="t" style="left:34px;width:20px;text-align:center;top:155.85px;font-size:11.4px;color:#444">2</div>
  <div class="t" style="left:103.2px;top:155.75px;font-size:11.8px;color:#222;">AD-004547</div>
  <div class="t" style="left:276.3px;top:155.75px;font-size:11.8px;color:#222;">XXXXx</div>
  <div class="t" style="left:364.8px;top:155.75px;font-size:11.8px;color:#222;">24598457743</div>
  <div class="t" style="left:469px;top:155.75px;font-size:11.8px;color:#222;">5</div>
  <div class="t" style="left:551px;top:155.65px;font-size:11.8px;color:#222;">件</div>
  <div class="t" style="left:628px;top:155.75px;font-size:11.8px;color:#222;">2023/06/01</div>
  <div class="t" style="left:750px;top:155.75px;font-size:11.8px;color:#222;">2023/06/30</div>
  <div class="abs" style="left:835px;top:151.25px;width:30px;height:16.8px;border-radius:8.4px;background:#4a7dc6"></div>
  <div class="abs" style="left:12.5px;top:173.40px;width:840px;height:1px;background:#ececec"></div>
  <div class="t" style="left:34px;width:20px;text-align:center;top:185.15px;font-size:11.4px;color:#444">3</div>
  <div class="t" style="left:103.2px;top:185.05px;font-size:11.8px;color:#222;">BB-0000W4W</div>
  <div class="t" style="left:276.3px;top:185.05px;font-size:11.8px;color:#222;">XXXXx</div>
  <div class="t" style="left:364.8px;top:185.05px;font-size:11.8px;color:#222;">24598457743</div>
  <div class="t" style="left:469px;top:185.05px;font-size:11.8px;color:#222;">2</div>
  <div class="t" style="left:551px;top:184.95px;font-size:11.8px;color:#222;">件</div>
  <div class="t" style="left:628px;top:185.05px;font-size:11.8px;color:#222;">2023/02/01</div>
  <div class="t" style="left:750px;top:185.05px;font-size:11.8px;color:#222;">2023/06/17</div>
  <div class="abs" style="left:835px;top:180.55px;width:30px;height:16.8px;border-radius:8.4px;background:#4a7dc6"></div>
  <div class="abs" style="left:12.5px;top:202.70px;width:840px;height:1px;background:#ececec"></div>
  <div class="t" style="left:34px;width:20px;text-align:center;top:214.45px;font-size:11.4px;color:#444">4</div>
  <div class="t" style="left:103.2px;top:214.35px;font-size:11.8px;color:#222;">FQ-577771</div>
  <div class="t" style="left:276.3px;top:214.35px;font-size:11.8px;color:#222;">XXXXx</div>
  <div class="t" style="left:364.8px;top:214.35px;font-size:11.8px;color:#222;">34385748753</div>
  <div class="t" style="left:469px;top:214.35px;font-size:11.8px;color:#222;">3</div>
  <div class="t" style="left:551px;top:214.25px;font-size:11.8px;color:#222;">件</div>
  <div class="t" style="left:628px;top:214.35px;font-size:11.8px;color:#222;">2023/02/01</div>
  <div class="t" style="left:750px;top:214.35px;font-size:11.8px;color:#222;">2023/06/30</div>
  <div class="abs" style="left:835px;top:209.85px;width:30px;height:16.8px;border-radius:8.4px;background:#4a7dc6"></div>
  <div class="abs" style="left:12.5px;top:232.00px;width:840px;height:1px;background:#ececec"></div>
  <div class="t" style="left:34px;width:20px;text-align:center;top:243.75px;font-size:11.4px;color:#444">5</div>
  <div class="t" style="left:103.2px;top:243.65px;font-size:11.8px;color:#222;">AD-004546</div>
  <div class="t" style="left:276.3px;top:243.65px;font-size:11.8px;color:#222;">XXXXx</div>
  <div class="t" style="left:364.8px;top:243.65px;font-size:11.8px;color:#222;">54247238523</div>
  <div class="t" style="left:469px;top:243.65px;font-size:11.8px;color:#222;">4</div>
  <div class="t" style="left:551px;top:243.55px;font-size:11.8px;color:#222;">件</div>
  <div class="t" style="left:628px;top:243.65px;font-size:11.8px;color:#222;">2023/02/01</div>
  <div class="t" style="left:750px;top:243.65px;font-size:11.8px;color:#222;">2023/06/15</div>
  <div class="abs" style="left:835px;top:239.15px;width:30px;height:16.8px;border-radius:8.4px;background:#4a7dc6"></div>
  <div class="abs" style="left:12.5px;top:261.30px;width:840px;height:1px;background:#ececec"></div>
  <svg class="abs" style="left:38px;top:270.45px" width="12.4" height="12.4" viewBox="0 0 12.4 12.4"><path d="M6.2 0V12.4M0 6.2H12.4" stroke="#c6c6c6" stroke-width="1"/></svg>
  <div class="abs" style="left:76.5px;top:115.30px;width:1px;height:175.80px;background:#f3f3f3"></div>
  <div class="abs" style="left:356.5px;top:115.30px;width:1px;height:146.50px;background:#f3f3f3"></div>
  <div class="abs" style="left:460.0px;top:115.30px;width:1px;height:146.50px;background:#f3f3f3"></div>
  <div class="abs" style="left:542.0px;top:115.30px;width:1px;height:146.50px;background:#f3f3f3"></div>
  <div class="abs" style="left:620.5px;top:115.30px;width:1px;height:146.50px;background:#f3f3f3"></div>
  <div class="abs" style="left:742.1px;top:115.30px;width:1px;height:146.50px;background:#f3f3f3"></div>
  <div class="abs" style="left:830.1px;top:115.30px;width:1px;height:146.50px;background:#f3f3f3"></div>
  <div class="abs" style="left:11.5px;top:302.3px;width:840px;height:88.50px;border:1px solid #e9e9e9;border-radius:6px 0 0 6px;background:#fff"></div>
  <svg class="abs" style="left:21.3px;top:314.85px" width="5.4" height="4.6" viewBox="0 0 5.4 4.6"><path d="M0 0H5.4L2.7 4.6Z" fill="#555"/></svg>
  <div class="abs" style="left:33px;top:308.45px;width:68px;height:17.6px;border-radius:9px;background:#2f9ae0"></div>
  <div class="t" style="left:43.3px;top:311.85px;font-size:11.8px;color:#fff;">生产完成</div>
  <div class="t" style="left:203px;top:312.15px;font-size:11px;color:#8c8c8c;letter-spacing:-0.2px;">总数：</div>
  <div class="t" style="left:236px;top:311.85px;font-size:11.2px;color:#8c8c8c;">1</div>
  <svg class="abs" style="left:249.6px;top:315.25px" width="7" height="5" viewBox="0 0 7 5"><path d="M0.6 0.8L3.5 3.8L6.4 0.8" stroke="#555" stroke-width="1.3" fill="none"/></svg>
  <div class="abs" style="left:12.5px;top:331.10px;width:840px;height:1px;background:#ececec"></div>
  <div class="t" style="left:34px;width:20px;text-align:center;top:342.85px;font-size:11.4px;color:#444">1</div>
  <div class="t" style="left:103.2px;top:342.75px;font-size:11.8px;color:#222;">AD-939488</div>
  <div class="t" style="left:276.3px;top:342.75px;font-size:11.8px;color:#222;">XXXXx</div>
  <div class="t" style="left:364.8px;top:342.75px;font-size:11.8px;color:#222;">34342328477</div>
  <div class="t" style="left:469px;top:342.75px;font-size:11.8px;color:#222;">1</div>
  <div class="t" style="left:551px;top:342.65px;font-size:11.8px;color:#222;">件</div>
  <div class="t" style="left:628px;top:342.75px;font-size:11.8px;color:#222;">2023/02/01</div>
  <div class="t" style="left:750px;top:342.75px;font-size:11.8px;color:#222;">2023/02/02</div>
  <div class="abs" style="left:835px;top:338.25px;width:30px;height:16.8px;border-radius:8.4px;background:#2f9ae0"></div>
  <div class="abs" style="left:12.5px;top:360.40px;width:840px;height:1px;background:#ececec"></div>
  <svg class="abs" style="left:38px;top:369.55px" width="12.4" height="12.4" viewBox="0 0 12.4 12.4"><path d="M6.2 0V12.4M0 6.2H12.4" stroke="#c6c6c6" stroke-width="1"/></svg>
  <div class="abs" style="left:76.5px;top:331.60px;width:1px;height:58.60px;background:#f3f3f3"></div>
  <div class="abs" style="left:356.5px;top:331.60px;width:1px;height:29.30px;background:#f3f3f3"></div>
  <div class="abs" style="left:460.0px;top:331.60px;width:1px;height:29.30px;background:#f3f3f3"></div>
  <div class="abs" style="left:542.0px;top:331.60px;width:1px;height:29.30px;background:#f3f3f3"></div>
  <div class="abs" style="left:620.5px;top:331.60px;width:1px;height:29.30px;background:#f3f3f3"></div>
  <div class="abs" style="left:742.1px;top:331.60px;width:1px;height:29.30px;background:#f3f3f3"></div>
  <div class="abs" style="left:830.1px;top:331.60px;width:1px;height:29.30px;background:#f3f3f3"></div>
  <div class="abs" style="left:11.5px;top:401.3px;width:840px;height:117.80px;border:1px solid #e9e9e9;border-radius:6px 0 0 6px;background:#fff"></div>
  <svg class="abs" style="left:21.3px;top:413.85px" width="5.4" height="4.6" viewBox="0 0 5.4 4.6"><path d="M0 0H5.4L2.7 4.6Z" fill="#555"/></svg>
  <div class="abs" style="left:33px;top:407.45px;width:56.3px;height:17.6px;border-radius:9px;background:#27ae60"></div>
  <div class="t" style="left:43.3px;top:410.85px;font-size:11.8px;color:#fff;">已发货</div>
  <div class="t" style="left:203px;top:411.15px;font-size:11px;color:#8c8c8c;letter-spacing:-0.2px;">总数：</div>
  <div class="t" style="left:236px;top:410.85px;font-size:11.2px;color:#8c8c8c;">2</div>
  <svg class="abs" style="left:249.6px;top:414.25px" width="7" height="5" viewBox="0 0 7 5"><path d="M0.6 0.8L3.5 3.8L6.4 0.8" stroke="#555" stroke-width="1.3" fill="none"/></svg>
  <div class="abs" style="left:12.5px;top:430.10px;width:840px;height:1px;background:#ececec"></div>
  <div class="abs" style="left:12.5px;top:431.60px;width:64px;height:28.30px;background:#f6f6f6"></div>
  <div class="abs" style="left:95px;top:431.60px;width:760px;height:28.30px;background:#f0f0f0"></div>
  <div class="t" style="left:34px;width:20px;text-align:center;top:441.85px;font-size:11.4px;color:#444">1</div>
  <div class="t" style="left:103.2px;top:441.75px;font-size:11.8px;color:#e2572f;">2024092901</div>
  <div class="t" style="left:276.3px;top:441.75px;font-size:11.8px;color:#e2572f;">AAAAA</div>
  <div class="t" style="left:364.8px;top:441.75px;font-size:11.8px;color:#e2572f;">24598457743</div>
  <div class="t" style="left:469px;top:441.75px;font-size:11.8px;color:#e2572f;">6</div>
  <div class="t" style="left:551px;top:441.65px;font-size:11.8px;color:#e2572f;">件</div>
  <div class="t" style="left:628px;top:441.75px;font-size:11.8px;color:#e2572f;">2024/09/29</div>
  <div class="t" style="left:750px;top:441.75px;font-size:11.8px;color:#e2572f;">2024/09/30</div>
  <div class="abs" style="left:835px;top:437.25px;width:30px;height:16.8px;border-radius:8.4px;background:#27ae60"></div>
  <div class="abs" style="left:12.5px;top:459.40px;width:840px;height:1px;background:#ececec"></div>
  <div class="t" style="left:34px;width:20px;text-align:center;top:471.15px;font-size:11.4px;color:#444">2</div>
  <div class="t" style="left:103.2px;top:471.05px;font-size:11.8px;color:#222;">SA-0003455</div>
  <div class="t" style="left:276.3px;top:471.05px;font-size:11.8px;color:#222;">AAAFE</div>
  <div class="t" style="left:364.8px;top:471.05px;font-size:11.8px;color:#222;">24598457743</div>
  <div class="t" style="left:469px;top:471.05px;font-size:11.8px;color:#222;">1</div>
  <div class="t" style="left:551px;top:470.95px;font-size:11.8px;color:#222;">件</div>
  <div class="t" style="left:628px;top:471.05px;font-size:11.8px;color:#222;">2023/05/03</div>
  <div class="t" style="left:750px;top:471.05px;font-size:11.8px;color:#222;">2023/05/11</div>
  <div class="abs" style="left:835px;top:466.55px;width:30px;height:16.8px;border-radius:8.4px;background:#27ae60"></div>
  <div class="abs" style="left:12.5px;top:488.70px;width:840px;height:1px;background:#ececec"></div>
  <svg class="abs" style="left:38px;top:497.85px" width="12.4" height="12.4" viewBox="0 0 12.4 12.4"><path d="M6.2 0V12.4M0 6.2H12.4" stroke="#c6c6c6" stroke-width="1"/></svg>
  <div class="abs" style="left:76.5px;top:430.60px;width:1px;height:87.90px;background:#f3f3f3"></div>
  <div class="abs" style="left:356.5px;top:430.60px;width:1px;height:58.60px;background:#f3f3f3"></div>
  <div class="abs" style="left:460.0px;top:430.60px;width:1px;height:58.60px;background:#f3f3f3"></div>
  <div class="abs" style="left:542.0px;top:430.60px;width:1px;height:58.60px;background:#f3f3f3"></div>
  <div class="abs" style="left:620.5px;top:430.60px;width:1px;height:58.60px;background:#f3f3f3"></div>
  <div class="abs" style="left:742.1px;top:430.60px;width:1px;height:58.60px;background:#f3f3f3"></div>
  <div class="abs" style="left:830.1px;top:430.60px;width:1px;height:58.60px;background:#f3f3f3"></div>
  <div class="abs" style="left:267.8px;top:40px;width:1px;height:449.5px;background:#dcdcdc"></div>
  <div class="abs" style="left:831.1px;top:76px;width:3.6px;height:470px;background:#fff"></div>
  <div class="abs" style="left:829.2px;top:79.6px;width:4.4px;height:479.5px;background:#d7d7d7;border-radius:2.2px"></div>
  <div class="t" style="left:203px;top:609.90px;font-size:11px;color:#8c8c8c;letter-spacing:-0.2px;">总数：</div>
  <div class="t" style="left:236px;top:609.60px;font-size:11.2px;color:#8c8c8c;">8</div>
  <svg class="abs" style="left:248.8px;top:613px" width="7" height="5" viewBox="0 0 7 5"><path d="M0.6 0.8L3.5 3.8L6.4 0.8" stroke="#555" stroke-width="1.3" fill="none"/></svg>
  <div class="abs" style="left:273.4px;top:629px;width:160px;height:4.6px;background:#d9d9d9;border-radius:2.3px"></div>
  <div class="abs" style="left:770.6px;top:548.8px;width:37.4px;height:37.4px;border-radius:50%;background:#fff;box-shadow:0 1px 7px rgba(0,0,0,.12)"></div>
  <svg class="abs" style="left:770.5px;top:548.8px" width="38" height="38" viewBox="0 0 38 38"><circle cx="7.6" cy="14.8" r="2" fill="#fff" stroke="#222" stroke-width="0.9"/><circle cx="30.2" cy="14.8" r="2" fill="#fff" stroke="#222" stroke-width="0.9"/><ellipse cx="18.9" cy="14.2" rx="9.7" ry="8" fill="#fff" stroke="#222" stroke-width="0.95"/><ellipse cx="15" cy="13.7" rx="0.85" ry="0.65" fill="#111"/><ellipse cx="23.2" cy="13.7" rx="0.85" ry="0.65" fill="#111"/><ellipse cx="18.9" cy="15.5" rx="1.3" ry="0.8" fill="#111"/><path d="M14.6 18.6Q15.6 19.6 16.6 18.8Q18.9 18.2 21.2 18.8Q22.2 19.6 23.4 18.6" fill="none" stroke="#333" stroke-width="0.8"/><path d="M14.4 18.4Q15.2 19.6 16.4 19M23.6 18.4Q22.8 19.6 21.6 19" fill="none" stroke="#5aa845" stroke-width="0.8"/><path d="M11.4 23.4L14.2 25.4L13.6 28.2L11 27Z" fill="#3f6ed6"/><path d="M26.6 23.2L23.4 25L24.4 27.6L27 26.6Z" fill="#3f6ed6"/><path d="M17 25.6L21.4 31.4L18.4 32L16.4 29.4Z" fill="#3f6ed6"/><path d="M10.8 23.2L8.6 31.8M27.4 23.2L30.6 31.8" fill="none" stroke="#222" stroke-width="0.95" stroke-linecap="round"/><path d="M15.4 31.8L17.2 21.4L24.8 31.8M18.4 22.4L21 26.2" fill="none" stroke="#222" stroke-width="0.95" stroke-linecap="round" stroke-linejoin="round"/></svg>
</div>
<!--MAIN-END-->

<!--WM-START-->
<!-- watermark -->
<div id="wm">
<div class="w" style="left:62px;top:159.0px">林一月/5440</div>
<div class="w" style="left:249px;top:159.0px">林一月/5440</div>
<div class="w" style="left:436px;top:159.0px">林一月/5440</div>
<div class="w" style="left:623px;top:159.0px">林一月/5440</div>
<div class="w" style="left:810px;top:159.0px">林一月/5440</div>
<div class="w" style="left:997px;top:159.0px">林一月/5440</div>
<div class="w" style="left:62px;top:312.5px">林一月/5440</div>
<div class="w" style="left:249px;top:312.5px">林一月/5440</div>
<div class="w" style="left:436px;top:312.5px">林一月/5440</div>
<div class="w" style="left:623px;top:312.5px">林一月/5440</div>
<div class="w" style="left:810px;top:312.5px">林一月/5440</div>
<div class="w" style="left:997px;top:312.5px">林一月/5440</div>
<div class="w" style="left:62px;top:466.0px">林一月/5440</div>
<div class="w" style="left:249px;top:466.0px">林一月/5440</div>
<div class="w" style="left:436px;top:466.0px">林一月/5440</div>
<div class="w" style="left:623px;top:466.0px">林一月/5440</div>
<div class="w" style="left:810px;top:466.0px">林一月/5440</div>
<div class="w" style="left:997px;top:466.0px">林一月/5440</div>
<div class="w" style="left:62px;top:619.5px">林一月/5440</div>
<div class="w" style="left:249px;top:619.5px">林一月/5440</div>
<div class="w" style="left:436px;top:619.5px">林一月/5440</div>
<div class="w" style="left:623px;top:619.5px">林一月/5440</div>
<div class="w" style="left:810px;top:619.5px">林一月/5440</div>
<div class="w" style="left:997px;top:619.5px">林一月/5440</div>
</div>
<!--WM-END-->

<!-- home indicator -->
<div class="abs" style="left:396.5px;top:738.4px;width:287px;height:5.4px;border-radius:3px;background:#000"></div>

</body>
</html>
